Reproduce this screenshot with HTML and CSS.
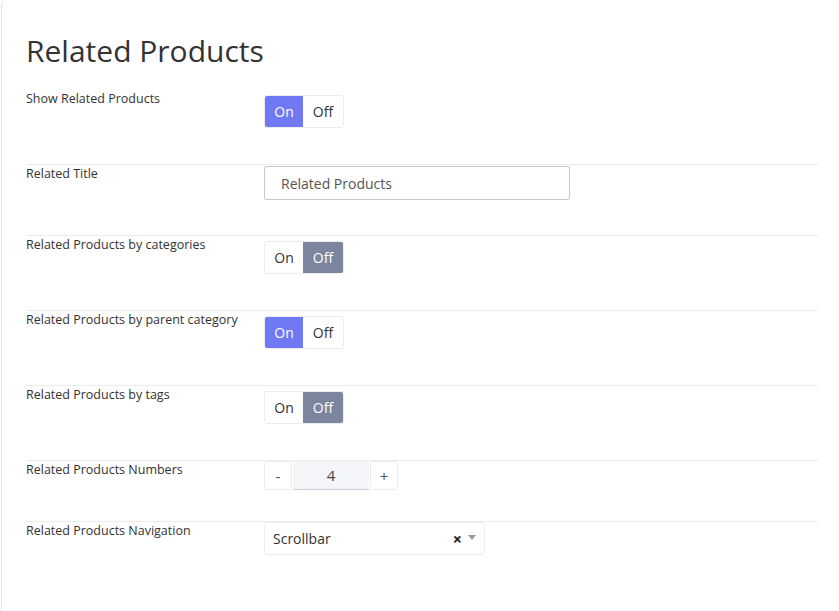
FILE: index.html
```html
<!DOCTYPE html>
<html lang="en">
  <head>
    <meta charset="UTF-8" />
    <meta name="viewport" content="width=device-width, initial-scale=1.0" />
    <title>Related Products</title>
    <link rel="stylesheet" href="styles.css">
  </head>
  <body>
    <div class="panel">
      <h1>Related Products</h1>

      <div class="row first">
        <div class="row-label">Show Related Products</div>
        <div class="toggle">
          <span class="on active">On</span>
          <span class="off">Off</span>
        </div>
      </div>

      <div class="row field">
        <div class="row-label">Related Title</div>
        <input class="text-input" type="text" value="Related Products" />
      </div>

      <div class="row">
        <div class="row-label">Related Products by categories</div>
        <div class="toggle">
          <span class="on">On</span>
          <span class="off active">Off</span>
        </div>
      </div>

      <div class="row">
        <div class="row-label">Related Products by parent category</div>
        <div class="toggle">
          <span class="on active">On</span>
          <span class="off">Off</span>
        </div>
      </div>

      <div class="row">
        <div class="row-label">Related Products by tags</div>
        <div class="toggle">
          <span class="on">On</span>
          <span class="off active">Off</span>
        </div>
      </div>

      <div class="row short">
        <div class="row-label">Related Products Numbers</div>
        <div class="number">
          <span class="step">-</span>
          <span class="value">4</span>
          <span class="step">+</span>
        </div>
      </div>

      <div class="row last">
        <div class="row-label">Related Products Navigation</div>
        <div class="select">
          <span class="select-text">Scrollbar</span>
          <span class="clear">&times;</span>
          <span class="caret"></span>
        </div>
      </div>
    </div>
  </body>
</html>
```

FILE: styles.css
```css
* {
  margin: 0;
  padding: 0;
  box-sizing: border-box;
}

body {
  font-family: "Open Sans", "Noto Sans", Arial, sans-serif;
  background: #fff;
  color: #333;
}

.panel {
  margin-left: 1px;
  min-height: 611px;
  border-left: 1px solid #e4e4e4;
  border-top-left-radius: 6px;
  padding: 0 21px 0 24px;
}

h1 {
  font-size: 30px;
  font-weight: 400;
  line-height: 40px;
  padding-top: 31px;
  margin-bottom: 19px;
  color: #333;
}

.row {
  display: flex;
  align-items: flex-start;
  border-top: 1px solid #ececec;
  padding-bottom: 36px;
}

.row.first {
  border-top: none;
}

.row.field {
  padding-bottom: 35px;
}

.row.short {
  padding-bottom: 31px;
}

.row-label {
  width: 238px;
  flex-shrink: 0;
  font-size: 12.5px;
  font-weight: 500;
  line-height: 18px;
  color: #333;
}

/* On / Off switch */
.toggle {
  display: flex;
  margin-top: 5px;
  height: 33px;
  border: 1px solid #ececec;
  border-radius: 3px;
  overflow: hidden;
}

.toggle span {
  display: flex;
  align-items: center;
  justify-content: center;
  font-size: 14px;
  color: #333;
  background: #fff;
}

.toggle .on {
  width: 38px;
}

.toggle .off {
  width: 40px;
}

.toggle .on.active {
  background: #7079f3;
  color: #fff;
}

.toggle .off.active {
  background: #7b869e;
  color: #fff;
}

.text-input {
  margin-top: 1px;
  width: 306px;
  height: 34px;
  border: 1px solid #c9c9c9;
  border-radius: 2px;
  padding: 0 16px;
  font-family: inherit;
  font-size: 14px;
  color: #555;
  outline: none;
}

/* number stepper */
.number {
  display: flex;
  height: 29px;
}

.number .step {
  width: 28px;
  display: flex;
  align-items: center;
  justify-content: center;
  border: 1px solid #ececec;
  border-radius: 3px;
  font-size: 15px;
  color: #555;
}

.number .value {
  width: 76px;
  margin: 0 1px;
  display: flex;
  align-items: center;
  justify-content: center;
  background: #f3f5f8;
  border-bottom: 1px solid #c8ccd4;
  font-size: 15px;
  color: #444;
}

/* select box */
.select {
  display: flex;
  align-items: center;
  width: 221px;
  height: 33px;
  border: 1px solid #ececec;
  border-radius: 3px;
  padding: 0 8px;
}

.select-text {
  flex: 1;
  font-size: 14px;
  color: #333;
}

.clear {
  font-size: 16px;
  font-weight: 700;
  color: #222;
  margin-right: 6px;
}

.caret {
  width: 0;
  height: 0;
  border-left: 4px solid transparent;
  border-right: 4px solid transparent;
  border-top: 5px solid #999;
  margin-top: -3px;
}
```
